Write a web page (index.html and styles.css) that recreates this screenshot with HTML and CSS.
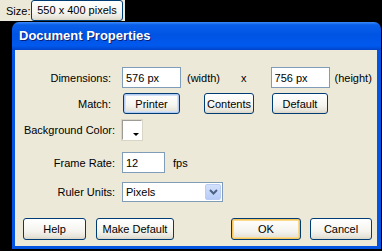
FILE: index.html
```html
<!DOCTYPE html>
<html lang="en">
<head>
  <meta charset="UTF-8">
  <title>Document Properties</title>
  <link rel="stylesheet" href="styles.css">
</head>
<body>
  <div class="toolbar">
    <span class="size-label">Size:</span>
    <button type="button" class="btn size-btn">550 x 400 pixels</button>
  </div>

  <div class="dialog">
    <div class="titlebar">Document Properties</div>
    <div class="dlg-body">
      <div class="row row-dim">
        <label class="lbl lbl-narrow">Dimensions:</label>
        <input type="text" class="field field-dim" value="576 px">
        <span class="unit">(width)</span>
        <span class="times">x</span>
        <input type="text" class="field field-dim" value="756 px">
        <span class="unit unit-h">(height)</span>
      </div>
      <div class="row row-match">
        <label class="lbl lbl-narrow">Match:</label>
        <button type="button" class="btn btn-focus btn-printer">Printer</button>
        <button type="button" class="btn btn-contents">Contents</button>
        <button type="button" class="btn btn-default">Default</button>
      </div>
      <div class="row row-bg">
        <label class="lbl">Background Color:</label>
        <span class="swatch"><span class="swatch-arrow"></span></span>
      </div>
      <div class="row row-rate">
        <label class="lbl">Frame Rate:</label>
        <input type="text" class="field field-rate" value="12">
        <span class="fps">fps</span>
      </div>
      <div class="row row-units">
        <label class="lbl">Ruler Units:</label>
        <div class="combo">
          <span class="combo-text">Pixels</span>
          <span class="combo-btn">
            <svg width="9" height="6" viewBox="0 0 9 6"><path d="M1 1 L4.5 4.5 L8 1" fill="none" stroke="#4d6185" stroke-width="2"/></svg>
          </span>
        </div>
      </div>
      <div class="actions">
        <div class="group">
          <button type="button" class="btn btn-help">Help</button>
          <button type="button" class="btn btn-make">Make Default</button>
        </div>
        <div class="group">
          <button type="button" class="btn btn-ok">OK</button>
          <button type="button" class="btn btn-cancel">Cancel</button>
        </div>
      </div>
    </div>
  </div>
</body>
</html>
```

FILE: styles.css
```css
body { margin: 0; background: #000; font-family: "Liberation Sans", Arial, sans-serif; font-size: 11px; color: #000; width: 382px; height: 251px; overflow: hidden; }

.toolbar { width: 125px; height: 21px; background: #ece9d8; display: flex; align-items: center; box-sizing: border-box; padding-left: 6px; }
.size-label { width: 25px; }
.size-btn { width: 92px; height: 16px; margin-top: -1px; font-size: 11px; padding: 0; }

.btn { font-family: inherit; font-size: 11px; color: #000; border: 1px solid #003c74; border-radius: 3px; background: linear-gradient(#ffffff, #f5f4ef 60%, #e6e3d8 90%, #d6d0c5); box-shadow: inset 0 -1px 0 #dcd8ca; padding: 0; height: 21px; box-sizing: border-box; }
.btn-focus { box-shadow: inset 0 0 0 1px #b4cbf1, inset 0 0 0 2px #d3e0f6; }
.btn-ok { box-shadow: inset 0 0 0 1px #f6c65c, inset 0 0 0 2px #fbd98d; }

.dialog { margin: 1px 0 0 12px; width: 369px; }
.titlebar { height: 28px; border-radius: 7px 7px 0 0; background: linear-gradient(#3e8dfb, #0a5fea 10%, #0054e3 45%, #0059ee 85%, #0044c9); color: #fff; font-weight: bold; font-size: 13px; line-height: 28px; padding-left: 7px; text-shadow: 1px 1px 0 #0a1e7a; }
.dlg-body { background: #ece9d8; border: solid #0553e1; border-width: 0 4px 3px 3px; height: 199px; padding-top: 17px; box-sizing: border-box; }

.row { display: flex; align-items: center; }
.lbl { width: 100px; text-align: right; margin-right: 7px; }
.lbl-narrow { width: 96px; margin-right: 11px; }

.field { font-family: inherit; font-size: 11px; border: 1px solid #7f9db9; background: #fff; height: 21px; box-sizing: border-box; padding: 0 3px; margin: 0; }
.field-dim { width: 59px; }
.unit { margin-left: 6px; }
.times { margin-left: 21px; margin-right: 24px; }
.unit-h { margin-left: 5px; }

.row-match { margin-top: 5px; }
.btn-printer { width: 57px; margin-left: 1px; }
.btn-contents { width: 50px; margin-left: 24px; }
.btn-default { width: 56px; margin-left: 18px; }

.row-bg { margin-top: 6px; }
.swatch { width: 20px; height: 20px; box-sizing: border-box; border: 1px solid; border-color: #9d9b93 #fff #fff #9d9b93; background: #fff; position: relative; box-shadow: 0 0 0 1px #d8d5c7; }
.swatch-arrow { position: absolute; right: 2px; bottom: 3px; width: 0; height: 0; border-left: 3px solid transparent; border-right: 3px solid transparent; border-top: 3px solid #000; }

.row-rate { margin-top: 12px; }
.field-rate { width: 43px; }
.fps { margin-left: 8px; }

.row-units { margin-top: 9px; }
.combo { width: 101px; height: 20px; box-sizing: border-box; border: 1px solid #7f9db9; background: #fff; display: flex; align-items: center; justify-content: space-between; }
.combo-text { padding-left: 3px; }
.combo-btn { width: 16px; height: 16px; margin-right: 1px; border-radius: 2px; background: linear-gradient(#d4e1fc, #b6cbf7); border: 1px solid #b9cdf6; box-sizing: border-box; display: flex; align-items: center; justify-content: center; }

.actions { display: flex; justify-content: space-between; margin-top: 16px; padding: 0 5px 0 8px; }
.group { display: flex; }
.actions .btn { height: 22px; }
.btn-help { width: 63px; }
.btn-make { width: 78px; margin-left: 10px; }
.btn-ok { width: 70px; }
.btn-cancel { width: 62px; margin-left: 9px; }
```
